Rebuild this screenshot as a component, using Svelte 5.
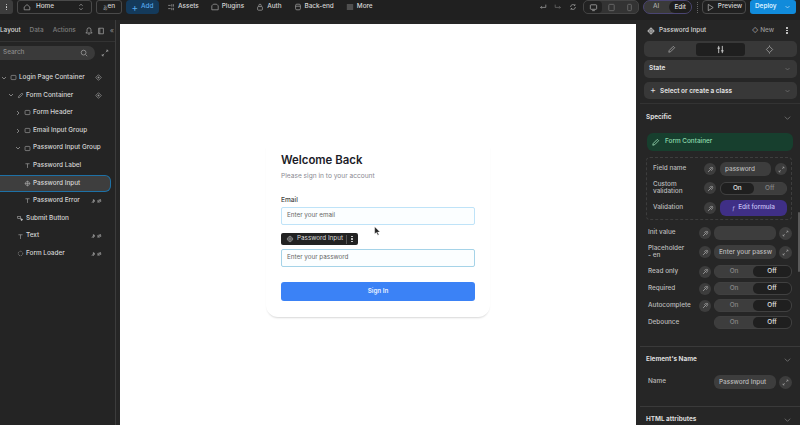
<script>
  const tree = [
    { n: 'Login Page Container', d: 0, c: 'v', i: 'box', r: 'dia' },
    { n: 'Form Container', d: 1, c: 'v', i: 'pen', r: 'dia' },
    { n: 'Form Header', d: 2, c: '>', i: 'box' },
    { n: 'Email Input Group', d: 2, c: '>', i: 'box' },
    { n: 'Password Input Group', d: 2, c: 'v', i: 'box' },
    { n: 'Password Label', d: 3, i: 'T' },
    { n: 'Password Input', d: 3, i: 'inp', sel: true },
    { n: 'Password Error', d: 3, i: 'T', r: 'eye' },
    { n: 'Submit Button', d: 1, i: 'btn' },
    { n: 'Text', d: 1, i: 'T', r: 'eye' },
    { n: 'Form Loader', d: 1, i: 'circ', r: 'eye' }
  ];
  const nav = ['Assets', 'Plugins', 'Auth', 'Back-end', 'More'];
  const toggles = ['Read only', 'Required', 'Autocomplete'];
</script>

{#snippet link()}
  <svg class="ic" viewBox="0 0 10 10"><path d="M2 8l2-2M6 1.500l2.500 2.500-2 2.500-3-3zM1.500 8.500l7-7" /></svg>
{/snippet}
{#snippet expand()}
  <span class="circle exp"><svg class="ic" viewBox="0 0 10 10"><path d="M6 4l2.500-2.500M6.500 1.500h2v2M4 6L1.500 8.500M1.500 6.500v2h2" /></svg></span>
{/snippet}
{#snippet chev()}
  <svg class="chev" viewBox="0 0 10 6"><path d="M1 1l4 4 4-4" /></svg>
{/snippet}
{#snippet diamond()}
  <svg class="ic small" viewBox="0 0 10 10"><path d="M5 1l4 4-4 4-4-4zM5 3.500v3M3.500 5h3" /></svg>
{/snippet}
{#snippet toggle(on, dark = false)}
  <div class="toggle" class:dark>
    <span class:act={on}>On</span><span class:act={!on}>Off</span>
  </div>
{/snippet}
{#snippet treeIcon(kind)}
  {#if kind === 'box'}<svg class="ic" viewBox="0 0 10 10"><rect x="1.500" y="2" width="7" height="6" rx="1" /></svg>
  {:else if kind === 'pen'}<svg class="ic" viewBox="0 0 10 10"><path d="M2 8l.5-2L7 1.500 8.500 3 4 7.500z" /></svg>
  {:else if kind === 'T'}<svg class="ic" viewBox="0 0 10 10"><path d="M2 2.500h6M5 2.500v6" /></svg>
  {:else if kind === 'inp'}<svg class="ic" viewBox="0 0 10 10"><circle cx="5" cy="5" r="3" /><path d="M5 1v8M1 5h8" /></svg>
  {:else if kind === 'btn'}<svg class="ic" viewBox="0 0 10 10"><rect x="1" y="2" width="4" height="3" /><path d="M5 5l3.500 1.500-1.500.5-.5 1.500z" fill="currentColor" /></svg>
  {:else}<svg class="ic" viewBox="0 0 10 10"><circle cx="5" cy="5" r="3.200" stroke-dasharray="1.500 1" /></svg>{/if}
{/snippet}

<div class="app">
  <header class="top">
    <div class="navL">
      <span class="kebab"><i></i><i></i><i></i></span>
      <div class="home">
        <svg class="ic" viewBox="0 0 10 10"><path d="M1.500 5L5 2l3.500 3v3.500h-7z" /></svg>
        <span>Home</span>
        <svg class="ic" viewBox="0 0 10 10"><path d="M3 3.500L5 1.500l2 2M3 6.500l2 2 2-2" /></svg>
      </div>
      <div class="lang"><small>あ</small>en</div>
      <div class="add"><b>+</b> Add</div>
      {#each nav as n}
        <div class="navItem">
          <svg class="ic" viewBox="0 0 10 10">
            {#if n === 'More'}<path d="M1 2.500h8M1 5h8M1 7.500h8" />
            {:else if n === 'Assets'}<path d="M1.500 3h3M1.500 7h3M6 1.500v3M8 1.500v3M6 6v3M8 6v3" />
            {:else if n === 'Auth'}<rect x="2" y="4.500" width="6" height="4.500" rx="1" /><path d="M3.500 4.500V3a1.500 1.500 0 013 0v1.500" />
            {:else if n === 'Back-end'}<rect x="2" y="1.500" width="6" height="7" rx="1.500" /><path d="M2 4h6" />
            {:else}<path d="M3 1.500h4l2 2v5H1v-5z" />{/if}
          </svg>
          <span>{n}</span>
        </div>
      {/each}
    </div>
    <div class="navR">
      <svg class="ic" viewBox="0 0 10 10"><path d="M8.500 2v3.500H2M3.500 4L2 5.500 3.500 7" /></svg>
      <svg class="ic dim" viewBox="0 0 10 10"><path d="M1.500 2v3.500H8M6.500 4L8 5.500 6.500 7" /></svg>
      <svg class="ic" viewBox="0 0 10 10"><path d="M8 5a3 3 0 01-5.300 2M2 5a3 3 0 015.300-2M7.500 1.500V3H6M2.500 8.500V7H4" /></svg>
      <div class="devices">
        <span class="dev on"><svg class="ic big" viewBox="0 0 10 10"><rect x="1.500" y="2" width="7" height="5" rx=".8" /><path d="M3.500 8.500h3" /></svg></span>
        <span class="dev"><svg class="ic big dim" viewBox="0 0 10 10"><rect x="2" y="1.500" width="6" height="7" rx=".8" /></svg></span>
        <span class="dev"><svg class="ic big dim" viewBox="0 0 10 10"><rect x="3" y="1.500" width="4" height="7" rx=".8" /></svg></span>
      </div>
      <div class="aiEdit"><span>AI</span><span class="act">Edit</span></div>
      <i class="vsep"></i>
      <div class="preview"><svg class="ic big" viewBox="0 0 10 10"><path d="M2.500 1.500l5.500 3.500-5.500 3.500z" /></svg>Preview</div>
      <div class="deploy"><span>Deploy</span>{@render chev()}</div>
    </div>
  </header>

  <div class="main">
    <aside class="left">
      <div class="tabs">
        <span class="on">Layout</span><span>Data</span><span>Actions</span>
        <svg class="ic" viewBox="0 0 10 10"><path d="M5 1a2.500 2.500 0 012.500 2.500V6L9 7.500H1L2.500 6V3.500A2.500 2.500 0 015 1zM4 9h2" /></svg>
        <svg class="ic" viewBox="0 0 10 10"><path d="M2 1.500h6v7H2zM3.500 1.500v7" /></svg>
        <span class="coll">«</span>
      </div>
      <div class="searchRow">
        <div class="search"><span>Search</span><svg class="ic" viewBox="0 0 10 10"><circle cx="4.500" cy="4.500" r="3" /><path d="M7 7l2 2" /></svg></div>
        <svg class="ic" viewBox="0 0 10 10"><path d="M6 4l2.500-2.500M6.500 1.500h2v2M4 6L1.500 8.500M1.500 6.500v2h2" /></svg>
      </div>
      <div class="tree">
        {#each tree as t}
          <div class="row d{t.d}" class:sel={t.sel}>
            <span class="car">{#if t.c === 'v'}<svg viewBox="0 0 6 6"><path d="M1 2l2 2 2-2" /></svg>{:else if t.c === '>'}<svg viewBox="0 0 6 6"><path d="M2 1l2 2-2 2" /></svg>{/if}</span>
            {@render treeIcon(t.i)}
            <span class="name">{t.n}</span>
            {#if t.r === 'dia'}<span class="rt">{@render diamond()}</span>{/if}
            {#if t.r === 'eye'}<span class="rt eye"><svg viewBox="0 0 14 7"><path d="M1 6l3-4M3 1.500l2 2-2 2zM8 3.500q2.500-3 5 0-2.500 3-5 0zM8.500 6l4-5" /></svg></span>{/if}
          </div>
        {/each}
      </div>
    </aside>

    <main class="canvas">
      <div class="page">
        <div class="card">
          <h1>Welcome Back</h1>
          <p class="sub">Please sign in to your account</p>
          <div class="lab">Email</div>
          <div class="input">Enter your email</div>
          <div class="tag">
            <svg class="ic" viewBox="0 0 10 10"><circle cx="5" cy="5" r="3" /><path d="M5 1v8M1 5h8" /></svg>
            <span>Password Input</span>
            <em></em>
            <span class="kb"><i></i><i></i><i></i></span>
          </div>
          <div class="input pw">Enter your password</div>
          <div class="signin">Sign In</div>
          <svg class="cursor" viewBox="0 0 10 14"><path d="M1 1v10l2.500-2 2 4 1.500-.8-2-3.700h3.500z" /></svg>
        </div>
      </div>
    </main>

    <aside class="right">
      <div class="head">
        <svg class="ic hi" viewBox="0 0 10 10"><circle cx="5" cy="5" r="3" /><path d="M5 .5v9M.5 5h9" /></svg>
        <span class="title">Password Input</span>
        <span class="new">◇ New</span>
        <span class="kb wide"><i></i><i></i><i></i></span>
      </div>
      <div class="seg">
        <span><svg class="ic big" viewBox="0 0 10 10"><path d="M2 8l.5-2L7 1.500 8.500 3 4 7.500z" /></svg></span>
        <span class="act"><svg class="ic big hi" viewBox="0 0 10 10"><path d="M3 1v8M7 1v8M1.500 3.500h3M5.500 6.500h3" /></svg></span>
        <span><svg class="ic big" viewBox="0 0 10 10"><path d="M5 1.500L8.500 5 5 8.500 1.500 5zM5 .5v1M5 8.500v1" /></svg></span>
      </div>
      <div class="select"><b>State</b>{@render chev()}</div>
      <div class="select s2"><b><i class="plus">+</i>Select or create a class</b>{@render chev()}</div>

      <section class="spec">
        <div class="secHead"><b>Specific</b>{@render chev()}</div>
        <div class="green"><svg class="ic big" viewBox="0 0 10 10"><path d="M2 8l.5-2L7 1.500 8.500 3 4 7.500z" /></svg>Form Container</div>
        <div class="group">
          <div class="prop"><span class="lbl">Field name</span><span class="circle">{@render link()}</span><span class="pill grow">password</span>{@render expand()}</div>
          <div class="prop"><span class="lbl">Custom<br />validation</span><span class="circle">{@render link()}</span><div class="grow">{@render toggle(true, true)}</div></div>
          <div class="prop f"><span class="lbl">Validation</span><span class="circle">{@render link()}</span><span class="formula grow"><i>ƒ</i> Edit formula</span></div>
        </div>
        <div class="props">
          <div class="prop"><span class="lbl">Init value</span><span class="circle">{@render link()}</span><span class="pill grow"></span>{@render expand()}</div>
          <div class="prop ph"><span class="lbl">Placeholder<br />- en</span><span class="circle">{@render link()}</span><span class="pill grow">Enter your passw</span>{@render expand()}</div>
          {#each toggles as t, i}
            <div class="prop tg" class:firstT={i === 0}><span class="lbl">{t}</span><span class="circle">{@render link()}</span><div class="grow">{@render toggle(false)}</div></div>
          {/each}
          <div class="prop tg"><span class="lbl">Debounce</span><span class="spacer"></span><div class="grow">{@render toggle(false)}</div></div>
        </div>
      </section>
      <section class="nameSec">
        <div class="secHead"><b>Element's Name</b>{@render chev()}</div>
        <div class="props named"><div class="prop"><span class="lbl">Name</span><span class="spacer"></span><span class="pill grow">Password Input</span>{@render expand()}</div></div>
      </section>
      <section class="html">
        <div class="secHead"><b>HTML attributes</b>{@render chev()}</div>
      </section>
      <div class="scroll"></div>
    </aside>
  </div>
</div>

<style>
  :global(body) { margin: 0; background: #232323; }
  .app { width: 800px; height: 425px; overflow: hidden; background: #242424; color: #d6d6d6; font: 500 6.4px/1.2 Inter, "Liberation Sans", sans-serif; display: flex; flex-direction: column; }
  .ic { width: 8px; height: 8px; flex: none; fill: none; stroke: #a5a5a5; stroke-width: .9; }
  .ic.big { width: 9px; height: 9px; }
  .ic.small { width: 7px; height: 7px; }
  .ic.dim { stroke: #707070; }
  .ic.hi { stroke: #e4e4e4; }
  .chev { width: 6px; height: 4px; fill: none; stroke: #8a8a8a; stroke-width: 1; flex: none; }

  .top { height: 20px; box-sizing: border-box; padding-bottom: 6px; display: flex; justify-content: space-between; align-items: center; background: #202020; }
  .navL, .navR { display: flex; align-items: center; }
  .kebab { width: 13px; height: 14px; margin-right: 4px; background: #3c3c3c; border-radius: 0 3px 3px 0; display: flex; flex-direction: column; gap: 1px; align-items: center; justify-content: center; }
  .kebab i, .kb i { width: 1.500px; height: 1.500px; background: #ddd; border-radius: 50%; display: block; }
  .home { width: 75px; height: 14px; box-sizing: border-box; padding: 0 6px 0 5px; margin-right: 4px; border: 1px solid #4a4a4a; border-radius: 3px; display: flex; align-items: center; gap: 5px; }
  .home span { flex: 1; }
  .lang { height: 14px; width: 26px; box-sizing: border-box; margin-right: 4px; border: 1px solid #4a4a4a; border-radius: 3px; display: flex; align-items: center; justify-content: center; }
  .lang small { font: 4.500px "Noto Sans CJK JP", sans-serif; color: #aaa; }
  .add { width: 33px; height: 14px; margin-right: 8px; background: #143a5b; color: #56a9ee; border-radius: 4px; display: flex; align-items: center; justify-content: center; gap: 3px; }
  .add b { font-weight: 400; font-size: 10px; line-height: 1; }
  .navItem { display: flex; align-items: center; gap: 3px; margin-right: 12px; }
  .navR { padding-right: 4px; }
  .navR > .ic { margin-right: 7px; }
  .navR > .ic:nth-child(3) { margin-right: 6px; }
  .devices { display: flex; width: 56px; height: 14px; box-sizing: border-box; margin-right: 4px; border: 1px solid #444; border-radius: 5px; background: #333; overflow: hidden; }
  .dev { flex: 1; display: flex; align-items: center; justify-content: center; }
  .dev.on { background: #222; border-radius: 4px; }
  .aiEdit { width: 49px; height: 14px; box-sizing: border-box; border: 1px solid #4a4573; border-radius: 7px; background: #3a3a3a; display: flex; align-items: center; justify-content: space-between; padding-left: 9px; color: #aaa; }
  .aiEdit .act { background: #1e1e1e; color: #ddd; height: 12px; line-height: 12px; padding: 0 5px; border-radius: 6px; }
  .vsep { width: 1px; height: 11px; margin: 0 4.500px; border-left: 1px dotted #666; box-sizing: border-box; }
  .preview { width: 44px; height: 14px; box-sizing: border-box; margin-right: 4px; border: 1px solid #4a4a4a; border-radius: 4px; display: flex; align-items: center; justify-content: center; gap: 3px; }
  .deploy { width: 46px; height: 14px; background: #118bdb; color: #d6eeff; border-radius: 3px; display: flex; align-items: center; justify-content: space-between; padding: 0 6px 0 5px; box-sizing: border-box; font-weight: 600; }
  .deploy .chev { stroke: #fff; width: 5px; }

  .main { flex: 1; display: flex; min-height: 0; }
  .left { width: 116px; flex: none; box-sizing: border-box; border-right: 1px solid #3c3c3c; background: #242424; }
  .tabs { height: 22px; padding-top: 1px; box-sizing: border-box; display: flex; align-items: center; color: #7f7f7f; border-bottom: 1px solid #333; }
  .tabs span { margin-right: 9px; }
  .tabs .on { color: #ddd; }
  .tabs .ic { margin-right: 4px; }
  .tabs .coll { margin: 0 0 0 1px; font-size: 7px; }
  .searchRow { display: flex; align-items: center; gap: 6px; padding-top: 4px; }
  .search { width: 95px; height: 14px; background: #3a3a3a; border-radius: 0 7px 7px 0; display: flex; align-items: center; justify-content: space-between; box-sizing: border-box; padding: 0 7px 0 3px; color: #8c8c8c; }
  .tree { padding-top: 9px; }
  .row { height: 17.600px; display: flex; align-items: center; gap: 2.500px; box-sizing: border-box; padding-right: 13px; white-space: nowrap; }
  .row .ic { width: 7px; height: 7px; }
  .car { width: 6px; height: 6px; flex: none; }
  .car svg { display: block; fill: none; stroke: #999; stroke-width: .8; }
  .d0 { padding-left: 1px; }
  .d1 { padding-left: 8px; }
  .d2, .d3 { padding-left: 15px; }
  .sel { background: #3e3e3e; border: 1px solid #1e71a6; border-left: none; border-radius: 0 6px 6px 0; margin-right: 4px; }
  .name { flex: 1; }
  .rt { display: flex; }
  .eye svg { width: 11px; height: 6px; fill: none; stroke: #aaa; stroke-width: .8; }

  .canvas { flex: 1; padding: 4px 4px 0 4px; box-sizing: border-box; background: #262626; }
  .page { background: #fff; height: 100%; display: flex; justify-content: center; }
  .card { position: relative; width: 224px; height: 172px; margin-top: 121px; box-sizing: border-box; padding: 0 15px; border-radius: 0 0 12px 12px; box-shadow: 0 2px 2px -1px rgba(0,0,0,.16); font: 400 6.300px/1.2 Inter, "Liberation Sans", sans-serif; color: #444; }
  h1 { margin: 8px 0 0; font: 600 11.400px/14px Inter, "Liberation Sans", sans-serif; color: #1c1c28; }
  .sub { margin: 4px 0 14px; color: #8a8a92; font-size: 6.600px; line-height: 10px; }
  .lab { color: #444; font-size: 6.600px; font-weight: 500; line-height: 10px; margin-bottom: 2px; }
  .input { height: 18px; box-sizing: border-box; padding: 0 5px; border: 1.500px solid #bfe3f8; border-radius: 2px; display: flex; align-items: center; color: #666; background: #fbfeff; }
  .input.pw { border-color: #a5d3e8; margin-top: 4px; }
  .tag { margin-top: 8px; width: 77px; height: 12px; box-sizing: border-box; padding: 0 4px 0 5px; background: #222; color: #ddd; border-radius: 2px; display: flex; align-items: center; gap: 3px; white-space: nowrap; }
  .tag span:first-of-type { flex: 1; }
  .tag em { width: 1px; height: 9px; background: #555; }
  .kb { display: flex; flex-direction: column; gap: 1px; width: 6px; align-items: center; }
  .signin { height: 19px; margin-top: 15px; background: #3b82f6; color: #e8f0ff; border-radius: 3px; display: flex; align-items: center; justify-content: center; font-weight: 600; }
  .cursor { position: absolute; left: 108px; top: 81px; width: 7px; height: 10px; fill: #222; stroke: #fff; stroke-width: .5; }

  .right { position: relative; width: 160px; flex: none; background: #262626; box-sizing: border-box; overflow: hidden; }
  .head { height: 21px; display: flex; align-items: center; padding: 0 10px 0 7px; gap: 4px; }
  .title { flex: 1; }
  .new { color: #999; }
  .kb.wide { margin-left: 6px; }
  .seg { margin: 0 3px 0 4px; height: 16px; display: grid; grid-template-columns: 1fr 1fr 1fr; background: #383838; border-radius: 5px; align-items: center; justify-items: center; padding: 1px 3px; box-sizing: border-box; }
  .seg span { display: flex; align-items: center; justify-content: center; }
  .seg .act { background: #1f1f1f; border-radius: 3px; width: 49px; height: 13px; }
  .select { margin: 3px 3px 0 4px; height: 18px; background: #383838; border-radius: 5px; display: flex; align-items: center; justify-content: space-between; padding: 0 7px 0 5px; }
  .select .chev { width: 5px; }
  .select b, .secHead b { font-weight: 700; color: #ddd; }
  .plus { font-style: normal; font-size: 9px; line-height: 1; font-weight: 400; margin: 0 4px 0 1px; }
  .select.s2 { margin-top: 4px; height: 17px; }
  .spec { margin-top: 4px; border-top: 1px solid #333; padding: 1px 0 17px; border-bottom: 1px solid #3a3a3a; }
  .secHead { height: 22px; margin-top: 2px; display: flex; align-items: center; justify-content: space-between; padding: 0 9px 0 6px; }
  .secHead .chev { width: 7px; }
  .green { margin: 4px 7px 0 7px; height: 18px; background: #173f2e; color: #8fdcae; border-radius: 6px; display: flex; align-items: center; gap: 5px; padding-left: 4px; }
  .green .ic { stroke: #9ee0b8; }
  .group { margin: 6px 8px 0 6px; box-sizing: border-box; border: 1px dashed #3d3d3d; border-radius: 4px; padding: 4px 4px 3px 6px; }
  .prop { height: 14px; display: flex; align-items: center; gap: 4px; }
  .group .prop + .prop { margin-top: 5px; }
  .group .prop.f { height: 16px; }
  .lbl { width: 47px; flex: none; color: #bdbdbd; line-height: 7.500px; white-space: nowrap; }
  .circle { width: 12px; height: 12px; flex: none; border-radius: 50%; background: #3d3d3d; display: flex; align-items: center; justify-content: center; }
  .circle .ic { width: 7px; height: 7px; }
  .pill { background: #3d3d3d; height: 14px; line-height: 14px; border-radius: 6px; padding: 0 5px; color: #bbb; white-space: nowrap; overflow: hidden; box-sizing: border-box; }
  .grow { flex: 1; min-width: 0; }
  .formula { height: 16px; background: #3f2f86; color: #c9c0f5; border-radius: 6px; display: flex; align-items: center; justify-content: center; gap: 3px; }
  .formula i { font-family: "Liberation Serif", serif; }
  .toggle { height: 13px; border-radius: 6px; background: #3d3d3d; display: grid; grid-template-columns: 1fr 1fr; align-items: center; text-align: center; color: #888; border: 1px solid #404040; box-sizing: border-box; }
  .toggle span { line-height: 11px; border-radius: 5px; }
  .toggle .act { background: #1f1f1f; color: #e4e4e4; }
  .props { margin: 6px 8px 0 8px; }
  .props .prop { gap: 3px; }
  .props .lbl { width: 48px; }
  .props .circle { width: 12px; }
  .props .exp { width: 13px; height: 13px; }
  .props .spacer { width: 12px; flex: none; }
  .props .ph { margin-top: 5px; }
  .props .tg { height: 13px; margin-top: 4px; }
  .props .firstT { margin-top: 6px; }
  .nameSec { border-bottom: 1px solid #3a3a3a; height: 57px; }
  .named { margin-top: 4px; }
  .scroll { position: absolute; right: 0; top: 192px; width: 2px; height: 60px; background: #5a5a5a; border-radius: 1px; }
</style>
